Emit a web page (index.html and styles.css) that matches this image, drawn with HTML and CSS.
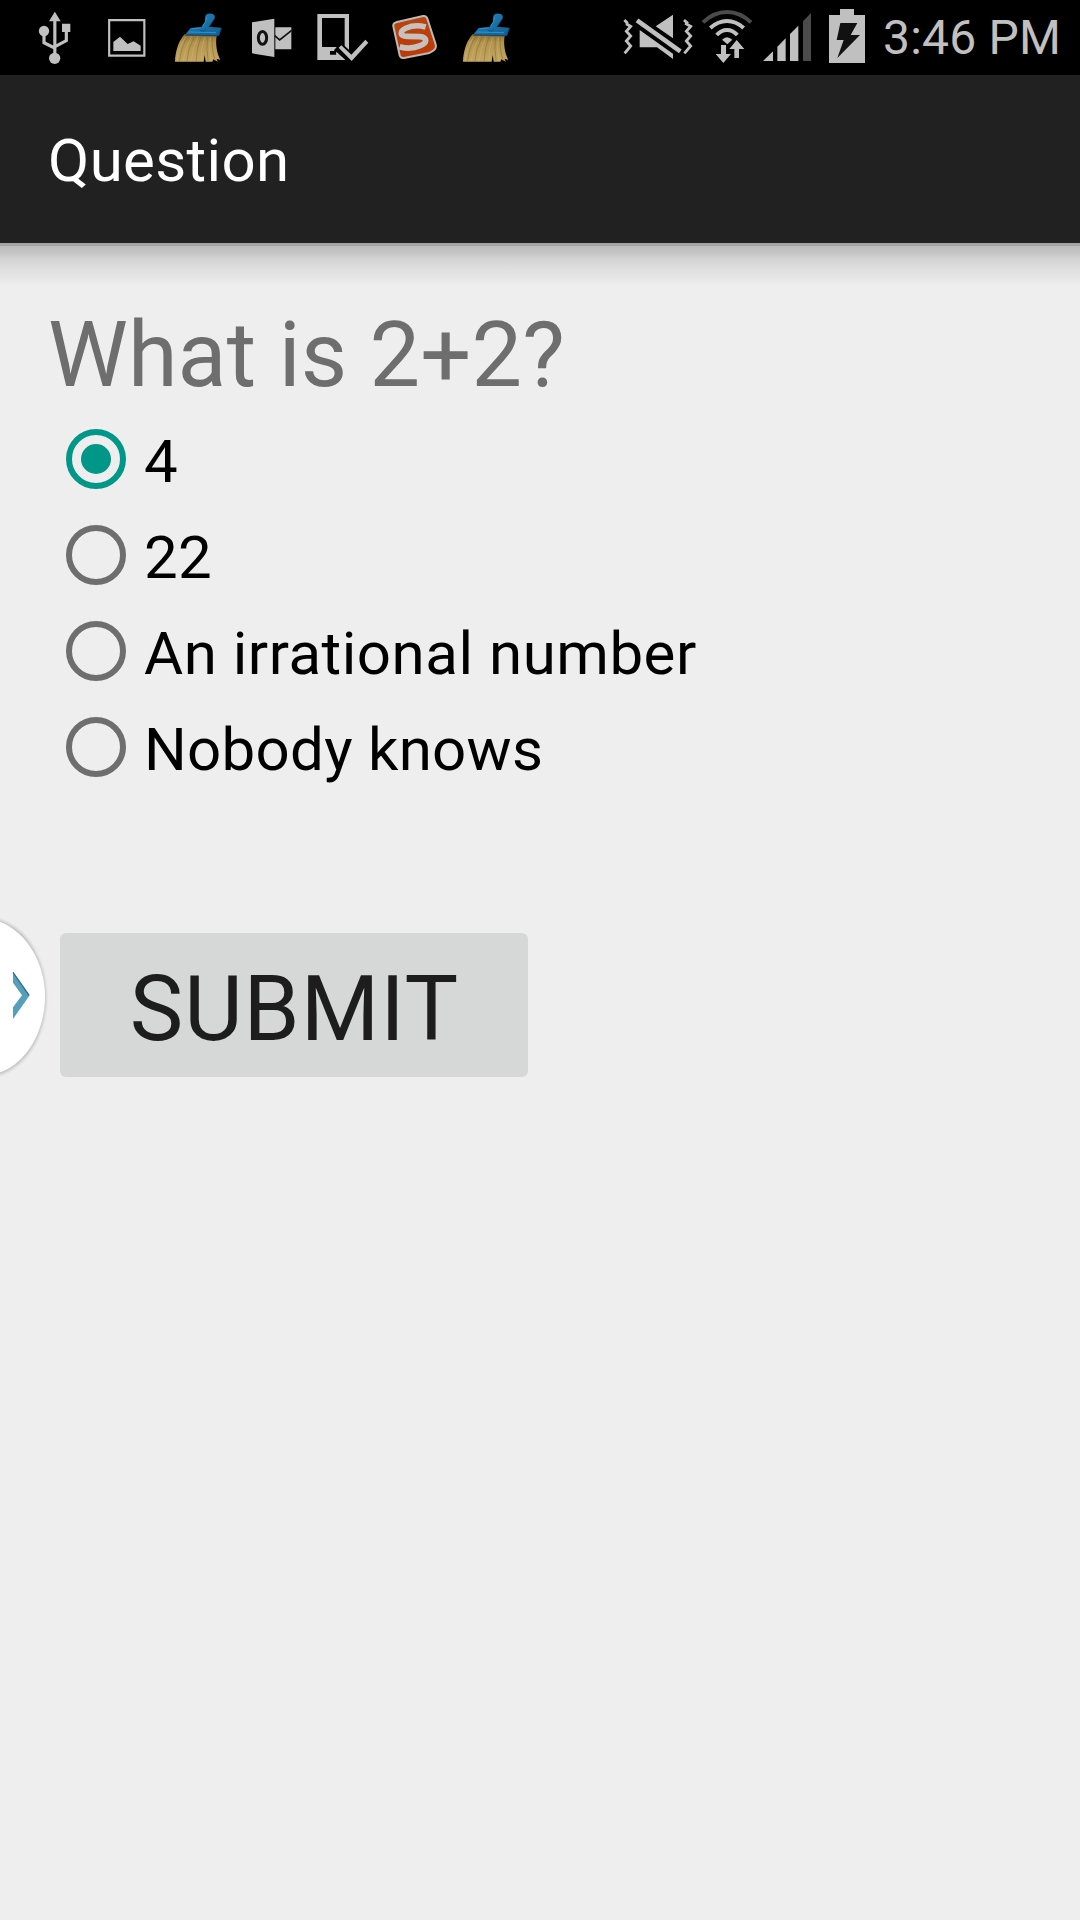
FILE: index.html
```html
<!DOCTYPE html>
<html lang="en">
<head>
<meta charset="utf-8">
<title>Question</title>
<link rel="stylesheet" href="styles.css">
</head>
<body>
<div class="screen">
  <div class="status-bar">
    <div class="notifications">
      <svg class="icon usb" viewBox="111 0 108 225">
        <g fill="none" stroke="#c0c0c0" stroke-width="9.500"><path d="M164.500 60V165M132 95V128L164 144M199 90V122L165 140"/></g>
        <path fill="#c0c0c0" d="M164.500 35L182 64H147zM186 71h25v25h-25z"/>
        <circle cx="132" cy="93" r="15.500" fill="#c0c0c0"/><circle cx="164" cy="175" r="17" fill="#c0c0c0"/>
      </svg>
      <svg class="icon picture" viewBox="321 0 120 225">
        <path fill="none" stroke="#c0c0c0" stroke-width="6.500" d="M327.500 60.500h105.500v106.500h-105.500z"/>
        <path fill="#c0c0c0" d="M340 153V126L360 110 383 132 401 124 422 137V153z"/>
      </svg>
      <svg class="icon broom" viewBox="519 0 150 225">
        <defs>
          <linearGradient id="bristle" x1="0" y1="0" x2="0" y2="1"><stop offset="0" stop-color="#8f7134"/><stop offset=".3" stop-color="#b29450"/><stop offset="1" stop-color="#c3a65f"/></linearGradient>
          <linearGradient id="handle" x1="0" y1="0" x2="1" y2="1"><stop offset="0" stop-color="#2187c0"/><stop offset="1" stop-color="#135f91"/></linearGradient>
          <g id="broom-shape">
            <path fill="url(#bristle)" d="M554 103L650 108C646 132 650 157 661 180L650 176 653 185 640 178 637 185H617L614 165 611 185H525C526 153 536 122 554 103z"/>
            <g fill="none" stroke="#78602c" stroke-width="2" opacity=".65"><path d="M565 107Q543 140 539 183M582 112Q564 145 561 183M603 110Q590 145 588 183M622 112Q619 145 624 182M637 112Q634 150 645 177"/></g>
            <g fill="none" stroke="#d3bb78" stroke-width="2" opacity=".6"><path d="M557 111Q534 145 532 183M575 109Q554 145 549 184M594 108Q578 145 573 184M614 111Q602 145 603 183M631 110Q626 145 633 183"/></g>
            <path fill="none" stroke="#7a4217" stroke-width="3" d="M555 106L651 108"/>
            <path fill="url(#handle)" d="M555 104L572 84 604 81 615 65 616 49Q620 38 634 41 647 43 644 55L627 80 664 83 656 107z"/>
            <path fill="none" stroke="#0e4c78" stroke-width="3" d="M644 55L627 80M664 84L656 107 558 104M599 89Q607 100 618 89"/>
            <path fill="none" stroke="#2b93cb" stroke-width="3" d="M620 51Q620 63 608 80M575 86L602 84M566 96L648 98"/>
          </g>
        </defs>
        <use href="#broom-shape"/>
      </svg>
      <svg class="icon outlook" viewBox="30 0 132 225">
        <path fill="#c0c0c0" d="M36 67L103 56V171L36 160zM106 82H154V148H106z"/>
        <ellipse cx="67.500" cy="113.500" rx="12.500" ry="19" fill="none" stroke="#111" stroke-width="9"/>
        <path fill="none" stroke="#111" stroke-width="5" d="M104 107L119 120 155 91"/>
      </svg>
      <svg class="icon tablet" viewBox="228 0 162 225">
        <path fill="#c0c0c0" fill-rule="evenodd" d="M232 42H327V180H232zM246 54V141H314V54zM270 153V164H289V153z"/>
        <path fill="none" stroke="#000" stroke-width="31" d="M292 139L335 177 387 122"/>
        <path fill="#c0c0c0" d="M296 143L304 136 334 164 376 119 385 128 335 183z"/>
        <path fill="#c0c0c0" d="M289 155L316 180H289z"/>
      </svg>
      <svg class="icon sogou" viewBox="453 0 144 225">
        <defs><linearGradient id="orange" x1="0" y1="0" x2="0" y2="1"><stop offset="0" stop-color="#b84510"/><stop offset="1" stop-color="#bd3905"/></linearGradient></defs>
        <path fill="url(#orange)" stroke="#bcb9b7" stroke-width="6" stroke-linejoin="round" d="M468 67L549 48Q559 46 562 56L587 133Q590 145 581 151L568 159 492 174Q482 176 479 166L460 79Q458 70 468 67z"/>
        <path fill="none" stroke="#c6c1be" stroke-width="17" d="M557 81C539 76 515 77 499 84 477 94 479 109 502 109L539 110C566 112 560 130 541 137 522 145 499 146 479 140"/>
      </svg>
      <svg class="icon broom-again" viewBox="519 0 150 225"><use href="#broom-shape"/></svg>
    </div>
    <div class="indicators">
      <svg class="icon mute" viewBox="66 0 213 225">
        <g fill="none" stroke="#c0c0c0" stroke-width="8.500"><path d="M73 60L81 68V73L92 79 79 94 92 108 79 123 92 138 74 160M252 60L261 68 259 72 272 79 259 94 272 108 259 123 272 138 253 160"/></g>
        <path fill="#c0c0c0" d="M167 79L219 44V115zM119 90L219 161V177L171 142H119z"/>
        <path stroke="#c0c0c0" stroke-width="14" d="M111 61L241 154"/>
      </svg>
      <svg class="icon wifi" viewBox="303 0 156 225">
        <g fill="none" stroke="#c0c0c0"><path stroke="#4b4b4b" stroke-width="12" d="M309 67Q342 36 381 36T453 67"/><path stroke-width="12" d="M331 84Q354 63 381 63T431 84"/><path stroke-width="12" d="M350 105Q364 90 381 90T412 105"/></g>
        <path fill="#c0c0c0" d="M366 119Q381 104 397 119L382 133z"/>
        <path fill="#c0c0c0" stroke="#000" stroke-width="4" paint-order="stroke" d="M410 120L433 147H417V174H403V147H388z"/>
        <path fill="#c0c0c0" d="M363 135H378V162H393L370 189 347 162H363z"/>
      </svg>
      <svg class="icon signal" viewBox="486 0 150 225">
        <path fill="#c0c0c0" d="M489 183L519 154V183zM532 183V140L557 115V183zM570 183V102L595 77V183z"/><path fill="#4b4b4b" d="M609 183V64L633 39V183z"/>
      </svg>
      <svg class="icon battery" viewBox="84 0 114 225">
        <path fill="#c0c0c0" d="M120 27H162V45H195V189H87V45H120z"/><path fill="#111" d="M121 69H172L152 105H180L112 174 131 120H110z"/>
      </svg>
      <span class="clock">3:46 PM</span>
    </div>
  </div>
  <header class="app-bar"><h1 class="title">Question</h1></header>
  <main class="content">
    <h2 class="question">What is 2+2?</h2>
    <div class="options" role="radiogroup">
      <div class="option"><span class="radio checked"></span><span class="label">4</span></div>
      <div class="option"><span class="radio"></span><span class="label">22</span></div>
      <div class="option"><span class="radio"></span><span class="label label-long">An irrational number</span></div>
      <div class="option"><span class="radio"></span><span class="label">Nobody knows</span></div>
    </div>
    <button class="submit" type="button"><span class="submit-text">SUBMIT</span></button>
  </main>
  <svg class="edge-tab" viewBox="0 0 180 600">
    <defs><filter id="soft" x="-20%" y="-20%" width="140%" height="140%"><feGaussianBlur stdDeviation="4"/></filter></defs>
    <path fill="#000" opacity=".18" filter="url(#soft)" d="M-60 56C60 42 138 165 138 292S60 538 -60 532z"/>
    <path fill="#fff" d="M0 65C82 98 135 190 135 290S82 488 0 517z"/>
    <path fill="#559fbb" d="M39 215L89 286 39 357V322L66 286 39 248z"/>
    <path fill="none" stroke="#347087" stroke-width="4" d="M39 217L87 286"/>
  </svg>
</div>
</body>
</html>
```
FILE: styles.css
```css
* { box-sizing: border-box; }
body { margin: 0; background: #eee; font-family: Roboto, "Noto Sans", sans-serif; }
.screen { position: relative; width: 1080px; height: 1920px; overflow: hidden; background: #eee; }
.status-bar { display: flex; justify-content: space-between; height: 75px; padding: 0 0 0 37px; background: #000; }
.notifications, .indicators { display: flex; }
.indicators { width: 458px; }
.icon { flex: none; display: block; height: 75px; }
.usb { width: 36px; }
.picture { width: 40px; margin-left: 34px; }
.broom { width: 50px; margin-left: 26px; }
.outlook { width: 44px; margin-left: 27px; }
.tablet { width: 54px; margin-left: 22px; }
.sogou { width: 48px; margin-left: 21px; }
.broom-again { width: 50px; margin-left: 22px; }
.mute { width: 71px; }
.wifi { width: 52px; margin-left: 8px; }
.signal { width: 50px; margin-left: 9px; }
.battery { width: 38px; margin-left: 16px; }
.clock { margin-left: 17px; font-size: 48px; line-height: 75px; letter-spacing: .2px; color: #c0c0c0; white-space: nowrap; }
.app-bar { display: flex; align-items: center; height: 168px; padding: 0 48px 0; background: #212121; }
.title { margin: 0; padding-top: 4px; font-size: 60px; font-weight: 400; line-height: 70px; letter-spacing: .35px; color: #fff; }
.content {
  height: 1677px;
  padding: 60px 48px 0;
  background: linear-gradient(#a3a3a3 0 3px, #bbb 3px, #c3c3c3 9px, #d3d3d3 16px, #dfdfdf 26px, #e6e6e6 35px, #eee 42px) no-repeat 0 0 / 100% 42px;
}
.question { margin: 0; font-size: 90px; font-weight: 400; line-height: 105px; letter-spacing: .1px; color: #6e6e6e; white-space: nowrap; }
.options { margin-top: 3px; }
.option { display: flex; align-items: center; height: 96px; padding-left: 18px; }
.radio { display: flex; align-items: center; justify-content: center; width: 60px; height: 60px; border: 6px solid #6e6e6e; border-radius: 50%; }
.checked { border-color: #009688; }
.checked::after { content: ""; width: 30px; height: 30px; border-radius: 50%; background: #009688; }
.label { margin-left: 18px; padding-top: 5px; font-size: 60px; line-height: 71px; letter-spacing: .28px; color: #000; white-space: nowrap; }
.label-long { letter-spacing: .53px; }
.submit { display: flex; align-items: center; justify-content: center; width: 468px; height: 144px; margin: 138px 0 0 12px; padding: 8px 0 0 1px; border: 0; border-radius: 6px; background: #d6d8d7; color: #1d1d1d; font-family: inherit; font-size: 90px; line-height: 105px; letter-spacing: 1px; }
.edge-tab { position: absolute; left: 0; top: 900px; width: 60px; height: 200px; }
```
